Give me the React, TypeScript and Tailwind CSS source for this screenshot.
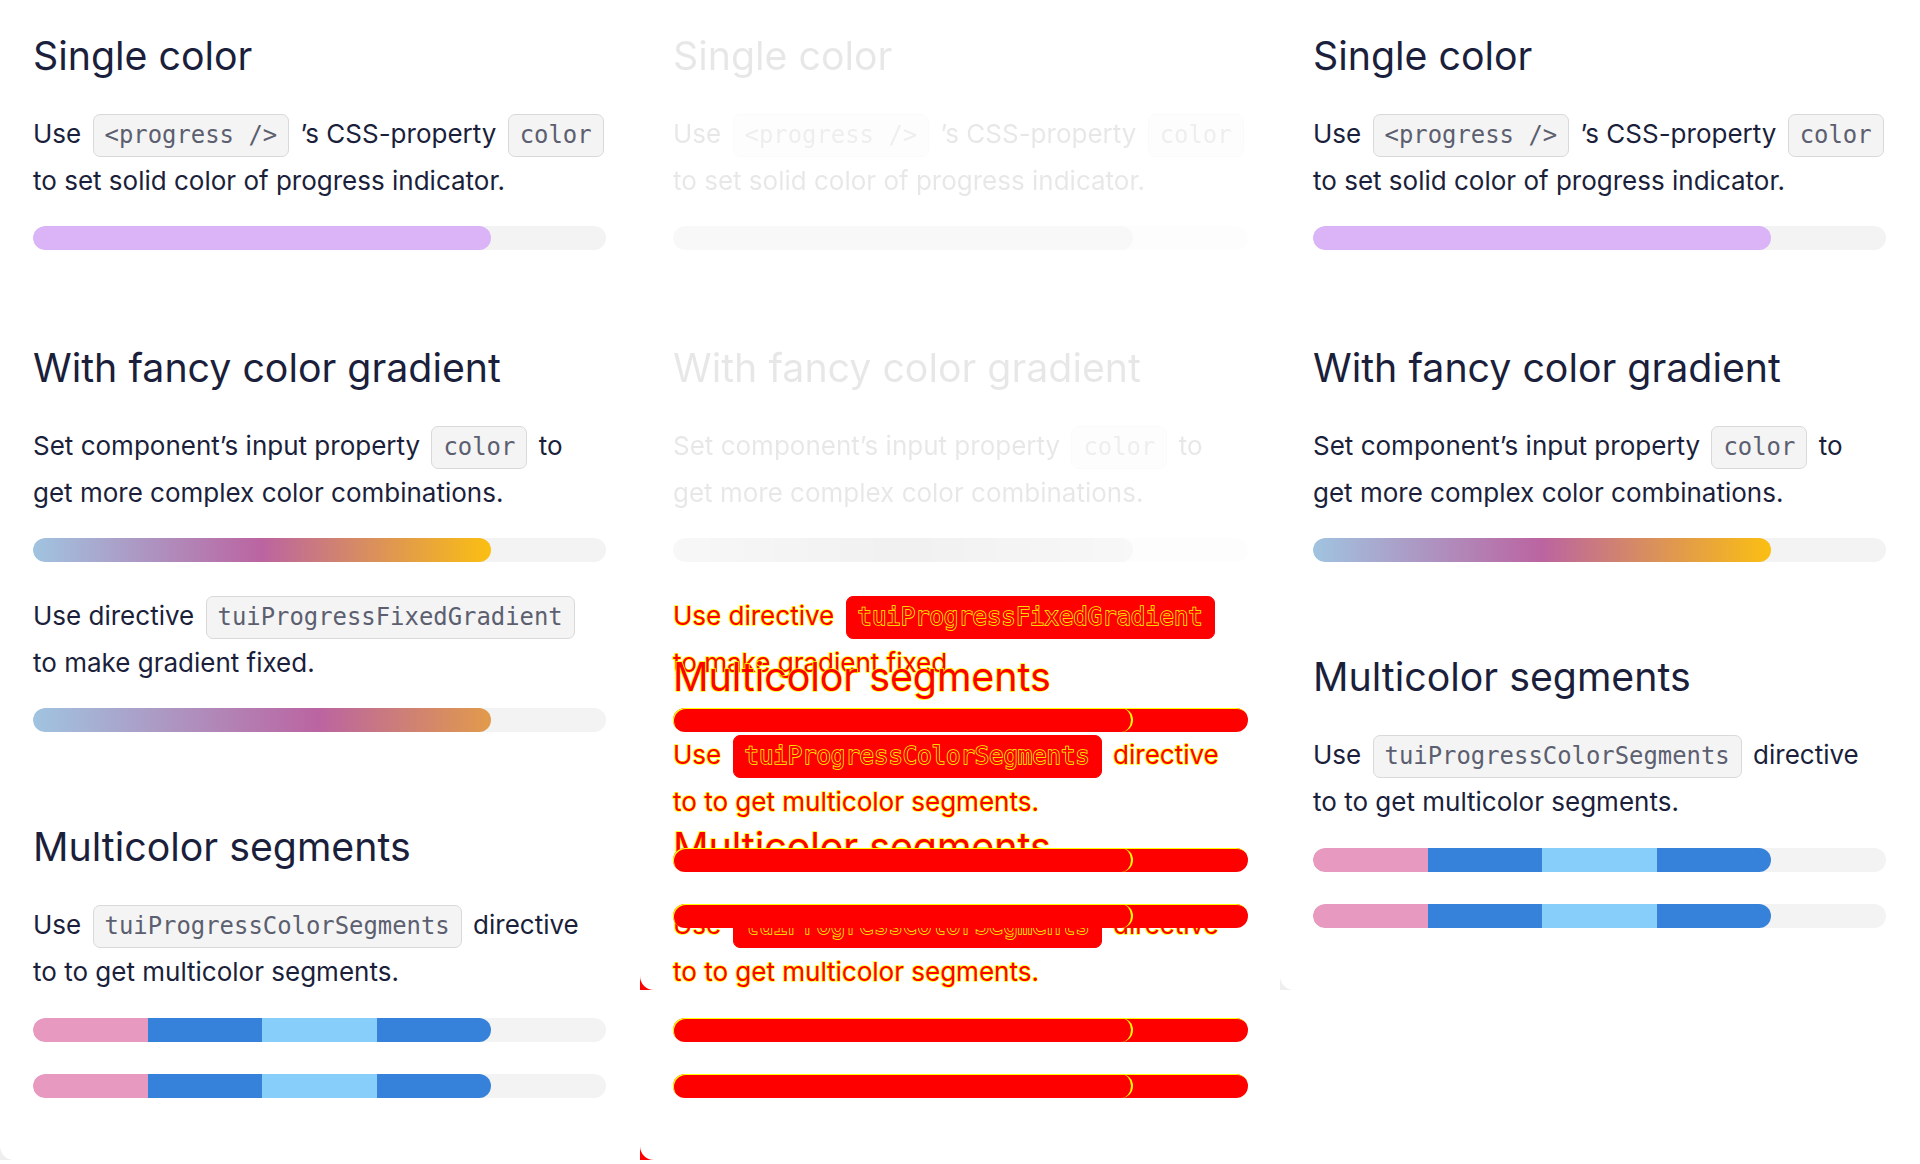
import React from 'react';

type V = 'normal' | 'faded' | 'diff' | 'hidden';
type Mode = 'left' | 'right' | 'midL' | 'midR';

const TEXT = 'text-[#1b1f3b]';
const DIFF_TEXT = 'text-[#ff0000] [-webkit-text-stroke:1.5px_#ffff00] [paint-order:stroke_fill]';

function vis(v: V) {
  if (v === 'faded') return 'opacity-10 grayscale';
  if (v === 'hidden') return 'invisible';
  return '';
}

function Heading({ v, className = '', children }: { v: V; className?: string; children: React.ReactNode }) {
  return (
    <h2 className={`text-[39.3px] leading-[44px] font-normal ${v === 'diff' ? DIFF_TEXT : TEXT} ${vis(v)} ${className}`}>
      {children}
    </h2>
  );
}

function Para({ v, className = '', children }: { v: V; className?: string; children: React.ReactNode }) {
  return (
    <p className={`text-[26px] leading-[47px] whitespace-nowrap ${v === 'diff' ? DIFF_TEXT : TEXT} ${vis(v)} ${className}`}>
      {children}
    </p>
  );
}

function Chip({ v, children }: { v: V; children: React.ReactNode }) {
  const c =
    v === 'diff'
      ? 'bg-[#ff0000] border-[#ff0000] text-[#ff0000] [-webkit-text-stroke:1.5px_#ffff00]'
      : 'bg-[#f4f4f4] border-[#d9d9d9] text-[#5c5f70]';
  return (
    <code
      className={`inline-block mx-[4px] px-[11px] pt-[7px] pb-[8px] leading-[26px] text-[23.9px] border rounded-[7px] font-['DejaVu_Sans_Mono',monospace] ${c}`}
    >
      {children}
    </code>
  );
}

type Kind = 'solid' | 'gradient' | 'fixed' | 'segments';

function Bar({ kind, v, className = '' }: { kind: Kind; v: V; className?: string }) {
  const diff = v === 'diff';
  const track = diff ? 'bg-[#ff0000] shadow-[inset_1px_1px_0_#ffff00]' : 'bg-[#f3f3f3]';
  let fill: React.ReactNode;
  if (diff) {
    fill = <div className="h-full w-4/5 rounded-full border-r-2 border-[#ffff00]" />;
  } else if (kind === 'solid') {
    fill = <div className="h-full w-4/5 rounded-full bg-[#dab4f6]" />;
  } else if (kind === 'gradient') {
    fill = <div className="h-full w-4/5 rounded-full bg-[linear-gradient(to_right,#a0c4e0,#bb64a1,#fbbf12)]" />;
  } else if (kind === 'fixed') {
    fill = (
      <div className="h-full w-4/5 rounded-full bg-[linear-gradient(to_right,#a0c4e0,#bb64a1,#fbbf12)] bg-[length:125%_100%] bg-no-repeat" />
    );
  } else {
    fill = (
      <div className="flex h-full w-4/5 overflow-hidden rounded-full">
        <div className="flex-1 bg-[#e899c0]" />
        <div className="flex-1 bg-[#3682db]" />
        <div className="flex-1 bg-[#87cefa]" />
        <div className="flex-1 bg-[#3682db]" />
      </div>
    );
  }
  return <div className={`h-[24px] w-full rounded-full overflow-hidden ${track} ${vis(v)} ${className}`}>{fill}</div>;
}

function Wedge({ color }: { color: string }) {
  return (
    <svg className="block -mt-[14px]" width="14" height="14" viewBox="0 0 14 14">
      <path d="M0 0 A14 14 0 0 0 14 14 L0 14 Z" fill={color} />
    </svg>
  );
}

function CardContent({ mode }: { mode: Mode }) {
  const top: V = mode === 'midL' ? 'faded' : mode === 'midR' ? 'hidden' : 'normal';
  const low: V = mode === 'midL' || mode === 'midR' ? 'diff' : 'normal';
  const hasFixed = mode === 'left' || mode === 'midL';
  const wedge = mode === 'midL' || mode === 'midR' ? '#ff0000' : '#eeeeee';

  return (
    <div className="flex flex-col">
      <div className="flex flex-col pl-[33px] pr-[34px] pt-[34px] pb-[62px]">
        <Heading v={top}>Single color</Heading>
        <Para v={top} className="mt-[32px]">
          Use <Chip v={top}>&lt;progress /&gt;</Chip> ’s CSS-property <Chip v={top}>color</Chip>
          <br />
          to set solid color of progress indicator.
        </Para>
        <Bar kind="solid" v={top} className="mt-[22px]" />

        <Heading v={top} className="mt-[96px]">
          With fancy color gradient
        </Heading>
        <Para v={top} className="mt-[32px]">
          Set component’s input property <Chip v={top}>color</Chip> to
          <br />
          get more complex color combinations.
        </Para>
        <Bar kind="gradient" v={top} className="mt-[22px]" />

        {hasFixed && (
          <>
            <Para v={low} className="mt-[30px]">
              Use directive <Chip v={low}>tuiProgressFixedGradient</Chip>
              <br />
              to make gradient fixed.
            </Para>
            <Bar kind="fixed" v={low} className="mt-[22px]" />
          </>
        )}

        <Heading v={low} className="mt-[93px]">
          Multicolor segments
        </Heading>
        <Para v={low} className="mt-[32px]">
          Use <Chip v={low}>tuiProgressColorSegments</Chip> directive
          <br />
          to to get multicolor segments.
        </Para>
        <Bar kind="segments" v={low} className="mt-[23px]" />
        <Bar kind="segments" v={low} className="mt-[32px]" />
      </div>
      <Wedge color={wedge} />
    </div>
  );
}

export default function App() {
  return (
    <div className="flex items-start w-[1920px] min-h-[1164px] bg-white font-['Inter',sans-serif] overflow-hidden">
      <div className="w-[640px] shrink-0">
        <CardContent mode="left" />
      </div>
      <div className="grid w-[640px] shrink-0">
        <div className="col-start-1 row-start-1">
          <CardContent mode="midL" />
        </div>
        <div className="col-start-1 row-start-1">
          <CardContent mode="midR" />
        </div>
      </div>
      <div className="w-[640px] shrink-0">
        <CardContent mode="right" />
      </div>
    </div>
  );
}
